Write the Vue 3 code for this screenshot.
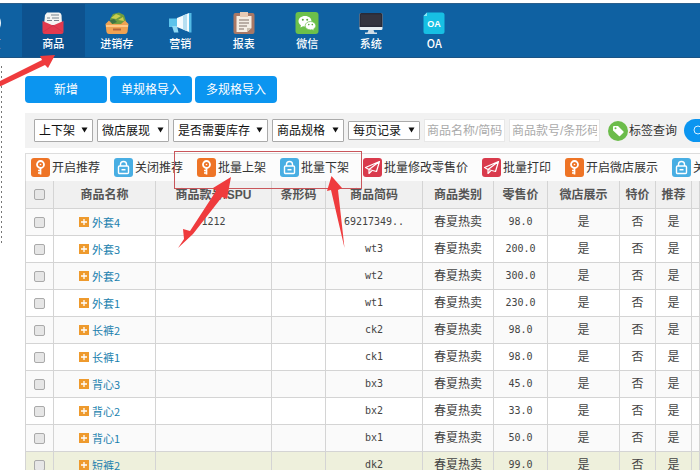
<script setup>
import { ref } from 'vue'

const nav = [
  { id: 'home', label: '首页' },
  { id: 'goods', label: '商品', active: true },
  { id: 'stock', label: '进销存' },
  { id: 'market', label: '营销' },
  { id: 'report', label: '报表' },
  { id: 'wechat', label: '微信' },
  { id: 'system', label: '系统' },
  { id: 'oa', label: 'OA' },
]

const filters = [
  { label: '上下架', size: 'short' },
  { label: '微店展现', size: 'medium' },
  { label: '是否需要库存', size: 'long' },
  { label: '商品规格', size: 'medium' },
  { label: '每页记录', size: 'medium', low: true },
]

const actions = [
  { icon: 'key', label: '开启推荐' },
  { icon: 'lock', label: '关闭推荐' },
  { icon: 'key', label: '批量上架' },
  { icon: 'lock', label: '批量下架' },
  { icon: 'plane', label: '批量修改零售价' },
  { icon: 'plane', label: '批量打印' },
  { icon: 'key', label: '开启微店展示' },
  { icon: 'lock', label: '关闭微店展示' },
]

const rows = ref([
  { name: '外套4', spu: '1212', code: '69217349..', price: '98.0' },
  { name: '外套3', spu: '', code: 'wt3', price: '200.0' },
  { name: '外套2', spu: '', code: 'wt2', price: '300.0' },
  { name: '外套1', spu: '', code: 'wt1', price: '230.0' },
  { name: '长裤2', spu: '', code: 'ck2', price: '98.0' },
  { name: '长裤1', spu: '', code: 'ck1', price: '98.0' },
  { name: '背心3', spu: '', code: 'bx3', price: '45.0' },
  { name: '背心2', spu: '', code: 'bx2', price: '33.0' },
  { name: '背心1', spu: '', code: 'bx1', price: '50.0' },
  { name: '短裤2', spu: '', code: 'dk2', price: '99.0', hover: true },
])
</script>

<template>
  <div class="page">
    <header class="topbar">
      <nav class="nav">
        <a v-for="n in nav" :key="n.id" href="#" class="nav-item" :class="{ active: n.active }">
          <svg class="nav-icon" viewBox="0 0 24 22" aria-hidden="true">
            <g v-if="n.id === 'home'">
              <circle cx="12" cy="11" r="11" fill="#eef6fb" />
            </g>
            <g v-else-if="n.id === 'goods'">
              <path d="M4 3 6 0.5H18Q20 .5 20.500 3L21 13H3Z" fill="#f4f4f2" />
              <path d="M10 3h8M6 6h3M11 6h7M6 8.500h5M13 8.500h5" stroke="#77848e" stroke-width="1.200" />
              <path d="M1.500 9 12 13.500 22.500 9V19.500Q22.500 22 20 22H4Q1.500 22 1.500 19.500Z" fill="#e23a4e" />
              <path d="M2 20 12 13.500 22 20" fill="none" stroke="#d4344a" />
            </g>
            <g v-else-if="n.id === 'stock'">
              <path d="M5 7 8 2 14 0.500 19 3 21 9 17 13H6Z" fill="#6f9c3f" />
              <path d="M6 6l5-4 5 2-5 3zM13 8l5-3 1 4z" fill="#c9cf4e" />
              <path d="M5 8l4-1 3 3-5 2z" fill="#3e7145" />
              <path d="M0.500 12 4 8.500 7 12H16L20 8.500 23.500 12 22.500 20Q22 22 20 22H4Q2 22 1.500 20Z" fill="#efa252" />
              <path d="M1 13H23V15H1Z" fill="#ffc987" />
              <path d="M8 16.500H16V18.500H8Z" fill="#b8643a" />
            </g>
            <g v-else-if="n.id === 'market'">
              <path d="M1 6.500H9V15H1Z" fill="#5cc3eb" />
              <path d="M4 14H9L10.500 20.500H6Z" fill="#8fd9f4" />
              <path d="M9 6 21 1V20L9 15Z" fill="#f5fbfe" />
              <path d="M15 3.500 19 2V19L15 17.500Z" fill="#b7dff1" />
              <path d="M21 1H23.500V20.500H21Z" fill="#54bbe5" />
            </g>
            <g v-else-if="n.id === 'report'">
              <rect x="1.500" y="1" width="21" height="21" rx="2" fill="#a97865" />
              <path d="M4.500 4H19.500V16L15 20H4.500Z" fill="#f4eee4" />
              <path d="M15 20V16H19.500Z" fill="#cbbfae" />
              <path d="M8 0H16V5H8Z" fill="#e6cbb4" />
              <path d="M7 8H17M7 11H17M7 14H15M7 17H12" stroke="#a79b90" stroke-width="1.300" />
            </g>
            <g v-else-if="n.id === 'wechat'">
              <rect x="0.500" width="23" height="22" rx="3" fill="#6cc04a" />
              <path d="M10 4C6 4 3.500 6.300 3.500 9.200c0 1.700 1 3.200 2.400 4.100L5.500 15.500 8 14.200l2 .3c4 0 6.500-2.400 6.500-5.300S14 4 10 4Z" fill="#fff" />
              <path d="M15.500 9.500c-3 0-5.300 1.900-5.300 4.200s2.300 4.200 5.300 4.200l1.500-.2 2.200 1.100-.5-1.900c1.300-.8 2.100-1.900 2.100-3.200 0-2.300-2.300-4.200-5.300-4.200Z" fill="#fff" stroke="#6cc04a" stroke-width=".7" />
              <g fill="#58a83a"><circle cx="7.800" cy="7.800" r="1" /><circle cx="12.200" cy="7.800" r="1" /><circle cx="13.800" cy="12.600" r=".8" /><circle cx="17.300" cy="12.600" r=".8" /></g>
            </g>
            <g v-else-if="n.id === 'system'">
              <rect x="0.500" y="1" width="23" height="17" rx="1.500" fill="#e8eef2" />
              <path d="M.5 15V2.500Q.5 1 2 1H22Q23.500 1 23.500 2.500V15Z" fill="#292b38" />
              <path d="M2 2.500H22V13.500H2Z" fill="#34343f" />
              <path d="M9.500 18H14.500L15.500 20.500H18V22H6V20.500H8.500Z" fill="#cfdde6" />
            </g>
            <g v-else>
              <path d="M5 .5H20Q22.500 .5 22.500 3V19.500Q22.500 22 20 22H4Q1.500 22 1.500 19.500V4Z" fill="#17bfe3" />
              <path d="M5 .5V4H1.500Z" fill="#8be5f5" />
              <text x="12" y="15" text-anchor="middle" class="oa">OA</text>
            </g>
          </svg>
          <span>{{ n.label }}</span>
        </a>
      </nav>
    </header>

    <main class="content">
      <div class="buttons">
        <button type="button">新增</button>
        <button type="button">单规格导入</button>
        <button type="button">多规格导入</button>
      </div>

      <form class="filters" @submit.prevent>
        <label v-for="f in filters" :key="f.label" class="pick" :class="[f.size, { low: f.low }]">
          <select :aria-label="f.label"><option>{{ f.label }}</option></select>
          <svg viewBox="0 0 8 7" aria-hidden="true"><path d="M.5 .5H7.500L4 6.500Z" fill="#111" /></svg>
        </label>
        <input class="box name-box" type="text" placeholder="商品名称/简码" aria-label="商品名称/简码" />
        <input class="box code-box" type="text" placeholder="商品款号/条形码" aria-label="商品款号/条形码" />
        <a href="#" class="tag">
          <svg viewBox="0 0 20 20" aria-hidden="true">
            <circle cx="10" cy="10" r="10" fill="#6cbc4b" />
            <path d="M5 6Q5 5 6 5H10L15.500 10.500Q16 11 15.500 11.500L12 15Q11.500 15.500 11 15L5 9.500Z" fill="#fff" />
            <circle cx="7.500" cy="7.300" r="1" fill="#6cbc4b" />
          </svg>
          <span>标签查询</span>
        </a>
        <button type="submit" class="search" aria-label="查询">
          <svg viewBox="0 0 12 12" aria-hidden="true"><circle cx="5" cy="5" r="4" fill="none" stroke="#d9f0ff" /><path d="M8 8 11.500 11.500" stroke="#d9f0ff" /></svg>
        </button>
      </form>

      <div class="actions">
        <a v-for="a in actions" :key="a.label" href="#" class="action">
          <svg viewBox="0 0 19 19" aria-hidden="true">
            <g v-if="a.icon === 'key'" fill="none" stroke="#fff">
              <rect width="19" height="19" rx="3" fill="#ee7426" stroke="none" />
              <circle cx="9.500" cy="6.500" r="3.500" stroke-width="1.800" />
              <circle cx="9.500" cy="6.500" r=".8" fill="#fff" stroke="none" />
              <path d="M9.500 10V16.500M9.500 12.500H7M9.500 15H7" stroke-width="1.700" />
            </g>
            <g v-else-if="a.icon === 'lock'" fill="none" stroke="#fff">
              <rect width="19" height="19" rx="3" fill="#48aee3" stroke="none" />
              <path d="M6.500 8V6.300Q6.500 3.500 9.500 3.500T12.500 6.300V8" stroke-width="1.400" />
              <rect x="4.500" y="8" width="10" height="7.500" rx="1" stroke-width="1.400" />
              <path d="M7.500 11.700H11.500" stroke-width="1.500" />
            </g>
            <g v-else fill="none" stroke="#fff" stroke-width="1.200" stroke-linejoin="round">
              <rect width="19" height="19" rx="3" fill="#d93a4c" stroke="none" />
              <path d="M16.500 3.500 2.500 9.500 6 11.500 13.500 13.500ZM16.500 3.500 6 11.500V15.500L9 12.500" />
            </g>
          </svg>
          <span>{{ a.label }}</span>
        </a>
      </div>

      <table class="goods">
        <colgroup>
          <col class="w-check" /><col class="w-name" /><col class="w-spu" /><col class="w-bar" /><col class="w-code" />
          <col class="w-kind" /><col class="w-price" /><col class="w-shop" /><col class="w-flag" /><col class="w-flag" /><col />
        </colgroup>
        <thead>
          <tr>
            <th><input type="checkbox" aria-label="全选" /></th>
            <th>商品名称</th><th>商品款号/SPU</th><th>条形码</th><th>商品简码</th><th>商品类别</th>
            <th>零售价</th><th>微店展示</th><th>特价</th><th>推荐</th><th></th>
          </tr>
        </thead>
        <tbody>
          <tr v-for="r in rows" :key="r.name" :class="{ hover: r.hover }">
            <td><input type="checkbox" :aria-label="r.name" /></td>
            <td class="name">
              <a href="#">
                <svg viewBox="0 0 10 10" aria-hidden="true"><rect width="10" height="10" fill="#ee9a2d" /><path d="M2 5H8M5 2V8" stroke="#fff" stroke-width="1.300" /></svg>
                <span>{{ r.name }}</span>
              </a>
            </td>
            <td class="num">{{ r.spu }}</td>
            <td></td>
            <td class="num">{{ r.code }}</td>
            <td>春夏热卖</td>
            <td class="num">{{ r.price }}</td>
            <td>是</td><td>否</td><td>是</td><td></td>
          </tr>
        </tbody>
      </table>
    </main>

    <svg class="marks" width="700" height="470" viewBox="0 0 700 470" aria-hidden="true">
      <path d="M1.500 66V246" stroke="#777" stroke-dasharray="2 3" />
      <rect x="174.500" y="151.500" width="187" height="37" fill="none" stroke="#c9565b" />
      <g fill="#ef3b3d">
        <path d="M0 81 42 60 40 56 55 55 48 68 45 65 0 86.500Z" />
        <path d="M231 177 213 188 216 191 190 231 183 229 184 239 178 248 193 234 222 197 227 199Z" />
        <path d="M331.500 176 327 191 331 190 344.500 248 338 190 342 188Z" />
      </g>
    </svg>
  </div>
</template>

<style>
html,
body {
  margin: 0;
  background: #fff;
}
</style>

<style scoped>
.page {
  position: relative;
  height: 100vh;
  overflow: hidden;
  box-sizing: border-box;
  padding-top: 3px;
  font: 12px/16px "Liberation Sans", "Noto Sans CJK SC", sans-serif;
  color: #333;
}
a {
  color: inherit;
  text-decoration: none;
}
button,
input,
select {
  font: inherit;
  margin: 0;
  box-sizing: border-box;
}
.topbar {
  height: 55px;
  box-sizing: border-box;
  background: #0f61a2;
  border-top: 1px solid #2a5f8c;
  border-bottom: 1px solid #1b5485;
}
.nav {
  display: grid;
  grid-template-columns: repeat(8, 1fr);
  width: 508px;
  height: 100%;
  margin-left: -42px;
}
.nav-item {
  display: flex;
  flex-direction: column;
  align-items: center;
  gap: 1px;
  padding-top: 8px;
  color: #fff;
  font-family: "Noto Sans CJK SC", sans-serif;
  font-size: 11px;
  font-weight: 500;
}
.nav-item.active {
  background: #0d528f;
}
.nav-icon {
  width: 24px;
  height: 22px;
}
.oa {
  font: bold 9px "Liberation Sans", sans-serif;
  fill: #fff;
}
.content {
  padding: 18px 0 0 25px;
}
.buttons {
  display: flex;
  gap: 3px;
}
.buttons button {
  width: 82px;
  height: 27px;
  padding: 0;
  border: 0;
  border-radius: 4px;
  background: #0b95f0;
  color: #fff;
}
.filters {
  display: flex;
  align-items: center;
  gap: 4px;
  height: 35px;
  margin-top: 10px;
  padding-left: 9px;
  background: #f2f2f2;
  white-space: nowrap;
}
.pick {
  position: relative;
  flex: none;
  height: 23px;
}
.pick.low {
  height: 19px;
}
.short {
  width: 59px;
}
.medium {
  width: 72px;
}
.long {
  width: 95px;
}
.pick select {
  width: 100%;
  height: 100%;
  padding: 0 0 0 4px;
  appearance: none;
  border: 1px solid #aaa;
  border-radius: 1px;
  background: #fff;
  color: #111;
}
.pick svg {
  position: absolute;
  right: 5px;
  top: 50%;
  width: 7px;
  height: 6px;
  margin-top: -4px;
  pointer-events: none;
}
.box {
  flex: none;
  height: 23px;
  padding: 0 2px;
  border: 1px solid #e8e8e8;
  background: #fff;
}
.box::placeholder {
  color: #aaa;
  opacity: 1;
}
.name-box {
  width: 81px;
}
.code-box {
  width: 91px;
}
.tag {
  display: flex;
  flex: none;
  align-items: center;
  gap: 1px;
  margin-left: 4px;
}
.tag svg {
  width: 20px;
  height: 20px;
}
.search {
  flex: none;
  width: 80px;
  height: 23px;
  margin-left: 3px;
  padding: 0 9px;
  border: 0;
  border-radius: 12px;
  background: #0b95f0;
  text-align: left;
}
.search svg {
  display: block;
  width: 12px;
  height: 12px;
}
.actions {
  display: flex;
  align-items: center;
  gap: 14px;
  height: 28px;
  box-sizing: border-box;
  margin-top: 5px;
  padding-left: 5px;
  border: 1px solid #ddd;
  border-width: 1px 0 0 1px;
  background: #fcfcfc;
  white-space: nowrap;
}
.action {
  display: flex;
  flex: none;
  align-items: center;
  gap: 2px;
}
.action svg {
  width: 19px;
  height: 19px;
}
.goods {
  width: 100%;
  table-layout: fixed;
  border-collapse: separate;
  border-spacing: 0;
  border-left: 1px solid #d4d4d4;
}
.w-check { width: 28px; }
.w-name { width: 102px; }
.w-spu { width: 116px; }
.w-bar { width: 54px; }
.w-code { width: 97px; }
.w-kind { width: 71px; }
.w-price { width: 54px; }
.w-shop { width: 72px; }
.w-flag { width: 36px; }
th,
td {
  height: 27px;
  box-sizing: border-box;
  padding: 0;
  border: 1px solid #d4d4d4;
  border-width: 0 1px 1px 0;
  text-align: center;
  white-space: nowrap;
}
th {
  height: 28px;
  background: #f0f0f0;
  color: #555;
  font-weight: bold;
}
td {
  color: #444;
}
tbody tr:nth-child(odd) {
  background: #fafafa;
}
tbody tr.hover {
  background: #eef0dc;
}
td.num {
  font-family: "DejaVu Sans Mono", monospace;
  font-size: 10px;
}
td.name {
  padding-left: 25px;
  text-align: left;
}
.name a {
  display: flex;
  align-items: center;
  gap: 3px;
  color: #1a7fae;
  font-family: "Noto Sans CJK SC", sans-serif;
  font-size: 11px;
}
.name svg {
  width: 10px;
  height: 10px;
}
input[type="checkbox"] {
  display: block;
  width: 11px;
  height: 11px;
  margin: 0 auto;
  appearance: none;
  border: 1px solid #aaa;
  border-radius: 2px;
  background: #e6e6e6;
}
.marks {
  position: absolute;
  left: 0;
  top: 0;
  pointer-events: none;
}
</style>
